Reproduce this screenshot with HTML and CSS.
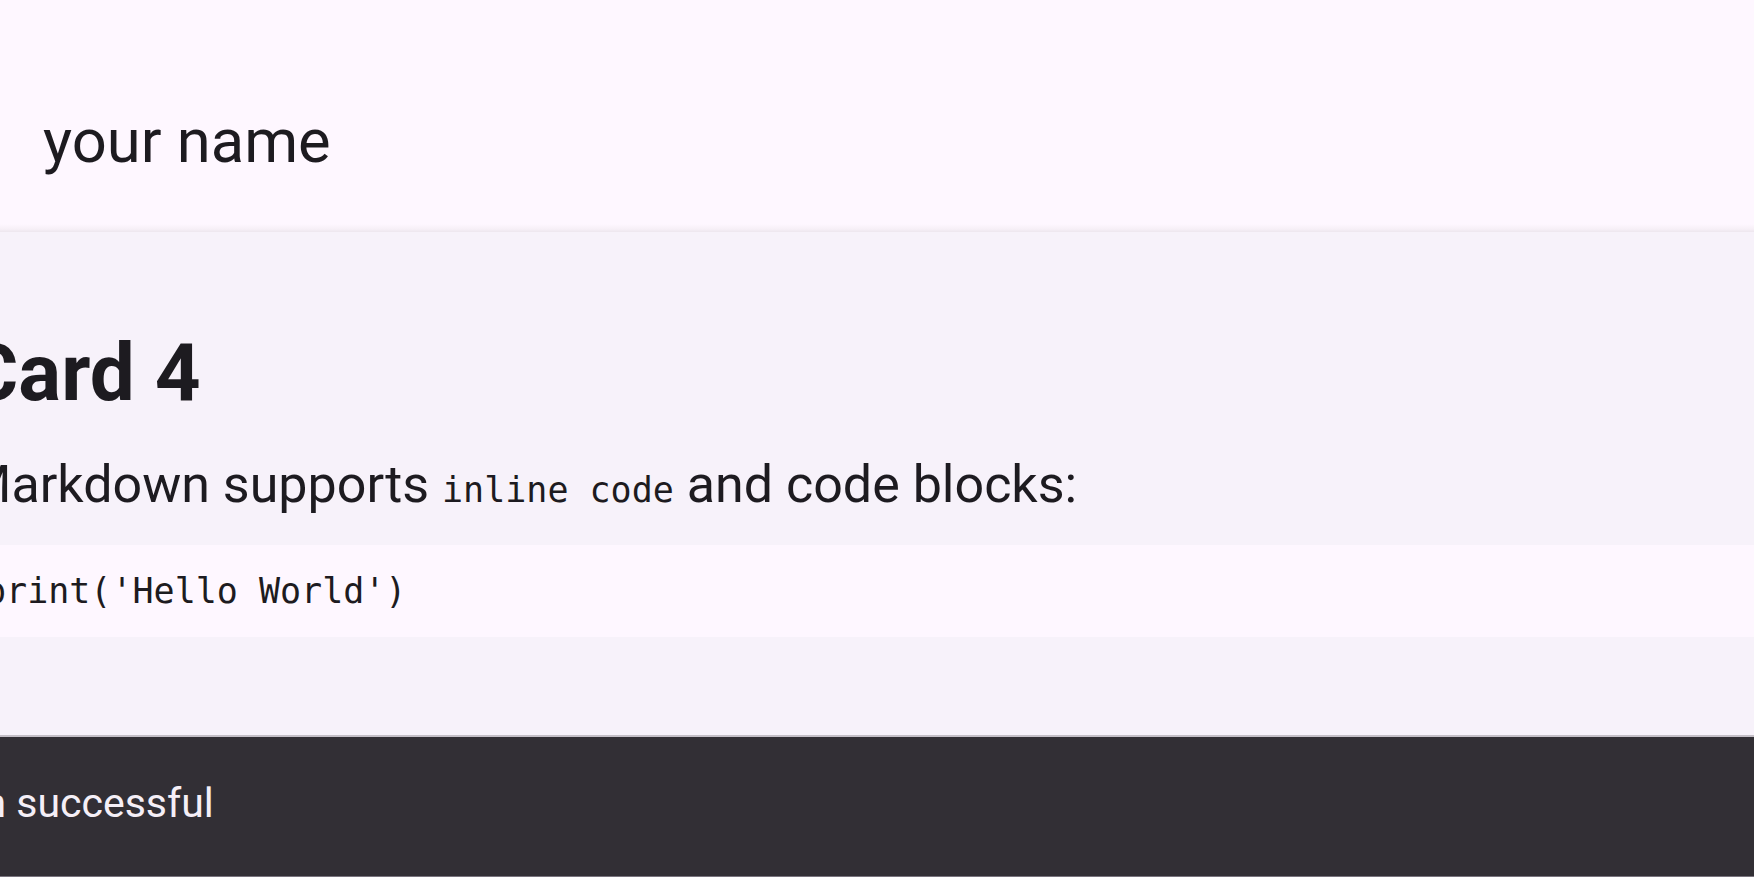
FILE: index.html
```html
<!DOCTYPE html>
<html lang="en">
<head>
<meta charset="utf-8">
<title>your name</title>
<link rel="stylesheet" href="styles.css">
</head>
<body>
  <header class="appbar">
    <h1 class="appbar-title">your name</h1>
  </header>
  <main class="card">
    <div class="card-content">
      <h2 class="card-heading">Card 4</h2>
      <p class="card-text">Markdown supports <code class="inline-code">inline code</code> and code blocks:</p>
      <pre class="code-block"><code>print('Hello World')</code></pre>
    </div>
  </main>
  <div class="snackbar">
    <span class="snackbar-text">Login successful</span>
  </div>
</body>
</html>
```

FILE: styles.css
```css
html, body {
  margin: 0;
  padding: 0;
}

body {
  width: 1754px;
  height: 877px;
  overflow: hidden;
  display: flex;
  flex-direction: column;
  font-family: Roboto, "Liberation Sans", sans-serif;
  color: #1d1b20;
  background: #f7f2fa;
}

.appbar {
  flex: 0 0 232px;
  box-sizing: border-box;
  padding: 104px 0 0 43px;
  background: linear-gradient(to bottom, #fef7ff 0, #fef7ff 224px, #f7f0f7 229px, #ede6ee 232px);
}

.appbar-title {
  margin: 0;
  font-size: 61.5px;
  font-weight: 400;
  line-height: 74px;
  color: #1d1b20;
}

.card {
  flex: 1 1 auto;
  background: #f7f2fa;
  overflow: hidden;
}

.card-content {
  margin-left: -34px;
  padding-top: 92px;
}

.card-heading {
  margin: 0;
  font-size: 80px;
  font-weight: 700;
  line-height: 98px;
}

.card-text {
  margin: 31px 0 0;
  font-size: 52px;
  line-height: 64px;
  font-weight: 400;
}

.inline-code {
  font-family: "DejaVu Sans Mono", "Liberation Mono", monospace;
  font-size: 35px;
  line-height: 1;
}

.code-block {
  margin: 28px 0 0 -9px;
  padding: 25px 28px;
  background: #fef7ff;
  font-family: "DejaVu Sans Mono", "Liberation Mono", monospace;
  font-size: 35px;
  line-height: 42px;
  color: #1d1b20;
}

.snackbar {
  flex: 0 0 142px;
  box-sizing: border-box;
  padding-top: 42px;
  background: #322f35;
  border-top: 2px solid #c4bfc7;
  border-bottom: 1px solid #79747e;
  overflow: hidden;
  white-space: nowrap;
}

.snackbar-text {
  display: block;
  margin-left: -95px;
  font-size: 41px;
  line-height: 49px;
  color: #f5eff7;
}
```
